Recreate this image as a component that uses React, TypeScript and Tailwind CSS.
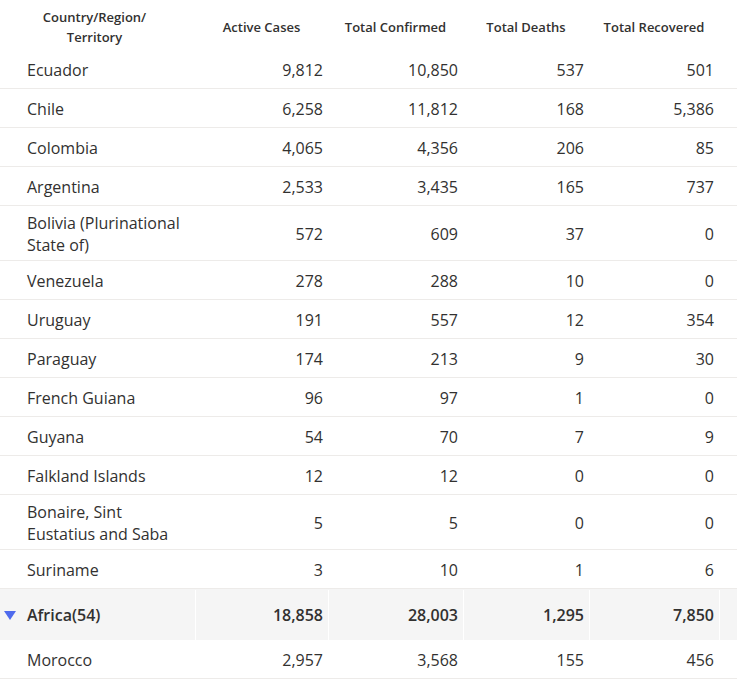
const rows: [string, string, string, string, string][] = [
  ["Ecuador", "9,812", "10,850", "537", "501"],
  ["Chile", "6,258", "11,812", "168", "5,386"],
  ["Colombia", "4,065", "4,356", "206", "85"],
  ["Argentina", "2,533", "3,435", "165", "737"],
  ["Bolivia (Plurinational State of)", "572", "609", "37", "0"],
  ["Venezuela", "278", "288", "10", "0"],
  ["Uruguay", "191", "557", "12", "354"],
  ["Paraguay", "174", "213", "9", "30"],
  ["French Guiana", "96", "97", "1", "0"],
  ["Guyana", "54", "70", "7", "9"],
  ["Falkland Islands", "12", "12", "0", "0"],
  ["Bonaire, Sint Eustatius and Saba", "5", "5", "0", "0"],
  ["Suriname", "3", "10", "1", "6"],
];

const cols = "grid grid-cols-[195px_133px_135px_126px_130px_1fr]";

function Row({ r }: { r: [string, string, string, string, string] }) {
  return (
    <div className={`${cols} min-h-[39px] border-b border-[#edebe9] text-[16px] text-[#323130]`}>
      <div className="flex items-center pt-[6px] pb-[4px] pl-[27px] pr-2 leading-[22px]">{r[0]}</div>
      {r.slice(1).map((v, i) => (
        <div key={i} className="flex items-center justify-end pr-[5px] pt-[1px]">
          {v}
        </div>
      ))}
      <div />
    </div>
  );
}

export default function App() {
  return (
    <div className="w-[737px] h-[679px] overflow-hidden bg-white font-['Segoe_UI','Open_Sans',sans-serif]">
      {/* header */}
      <div className={`${cols} h-[50px] pt-[4px] text-[13px] font-semibold text-[#323130] leading-[20px]`}>
        <div className="flex items-center justify-center pr-[6px] text-center">
          Country/Region/
          <br />
          Territory
        </div>
        <div className="flex items-center justify-center">Active Cases</div>
        <div className="flex items-center justify-center">Total Confirmed</div>
        <div className="flex items-center justify-center">Total Deaths</div>
        <div className="flex items-center justify-center">Total Recovered</div>
        <div />
      </div>

      {rows.map((r) => (
        <Row key={r[0]} r={r} />
      ))}

      {/* group row */}
      <div className={`${cols} h-[51px] bg-[#f5f5f5] pt-[1px] text-[16px] font-semibold text-[#323130]`}>
        <div className="flex items-center">
          <svg width="12" height="9" viewBox="0 0 12 9" className="ml-[4px] mr-[11px]">
            <path d="M0 0H12L6 9Z" fill="#4f6bed" />
          </svg>
          Africa(54)
        </div>
        <div className="flex items-center justify-end border-l border-white pr-[5px]">18,858</div>
        <div className="flex items-center justify-end border-l border-white pr-[5px]">28,003</div>
        <div className="flex items-center justify-end border-l border-white pr-[5px]">1,295</div>
        <div className="flex items-center justify-end border-l border-white pr-[5px]">7,850</div>
        <div className="border-l border-white" />
      </div>

      <Row r={["Morocco", "2,957", "3,568", "155", "456"]} />
    </div>
  );
}
